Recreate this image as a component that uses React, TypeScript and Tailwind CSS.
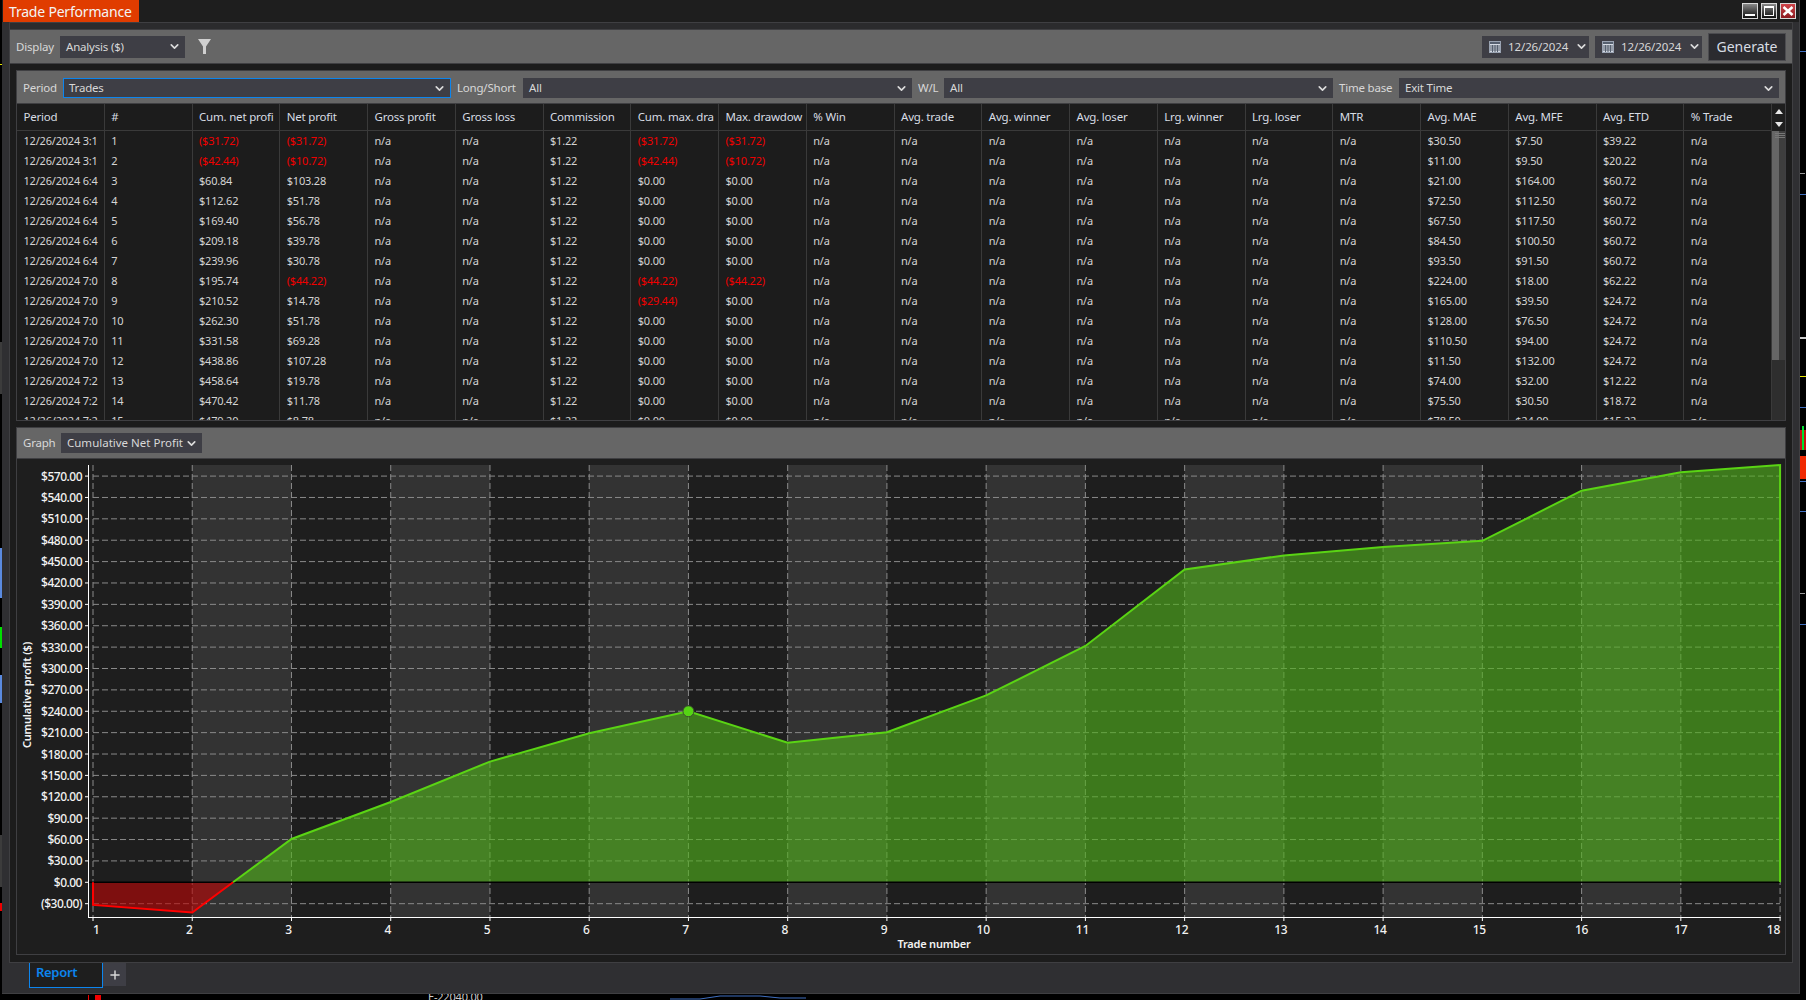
import React from 'react';
import { ChevronDown, Plus } from 'lucide-react';

const periodRows: [string, string, string, string, string, string, string, string, string][] = [
  ['3:1', '1', '($31.72)', '($31.72)', '($31.72)', '($31.72)', '$30.50', '$7.50', '$39.22'],
  ['3:1', '2', '($42.44)', '($10.72)', '($42.44)', '($10.72)', '$11.00', '$9.50', '$20.22'],
  ['6:4', '3', '$60.84', '$103.28', '$0.00', '$0.00', '$21.00', '$164.00', '$60.72'],
  ['6:4', '4', '$112.62', '$51.78', '$0.00', '$0.00', '$72.50', '$112.50', '$60.72'],
  ['6:4', '5', '$169.40', '$56.78', '$0.00', '$0.00', '$67.50', '$117.50', '$60.72'],
  ['6:4', '6', '$209.18', '$39.78', '$0.00', '$0.00', '$84.50', '$100.50', '$60.72'],
  ['6:4', '7', '$239.96', '$30.78', '$0.00', '$0.00', '$93.50', '$91.50', '$60.72'],
  ['7:0', '8', '$195.74', '($44.22)', '($44.22)', '($44.22)', '$224.00', '$18.00', '$62.22'],
  ['7:0', '9', '$210.52', '$14.78', '($29.44)', '$0.00', '$165.00', '$39.50', '$24.72'],
  ['7:0', '10', '$262.30', '$51.78', '$0.00', '$0.00', '$128.00', '$76.50', '$24.72'],
  ['7:0', '11', '$331.58', '$69.28', '$0.00', '$0.00', '$110.50', '$94.00', '$24.72'],
  ['7:0', '12', '$438.86', '$107.28', '$0.00', '$0.00', '$11.50', '$132.00', '$24.72'],
  ['7:2', '13', '$458.64', '$19.78', '$0.00', '$0.00', '$74.00', '$32.00', '$12.22'],
  ['7:2', '14', '$470.42', '$11.78', '$0.00', '$0.00', '$75.50', '$30.50', '$18.72'],
  ['7:2', '15', '$479.20', '$8.78', '$0.00', '$0.00', '$78.50', '$24.00', '$15.22'],
];

const columns = [
  'Period', '#', 'Cum. net profi', 'Net profit', 'Gross profit', 'Gross loss', 'Commission', 'Cum. max. dra', 'Max. drawdow', '% Win',
  'Avg. trade', 'Avg. winner', 'Avg. loser', 'Lrg. winner', 'Lrg. loser', 'MTR', 'Avg. MAE', 'Avg. MFE', 'Avg. ETD', '% Trade',
];

const na = 'n/a';

function toCells(r: string[]) {
  return [
    `12/26/2024 ${r[0]}`, r[1], r[2], r[3], na, na, '$1.22', r[4], r[5],
    na, na, na, na, na, na, na, r[6], r[7], r[8], na,
  ];
}

// chart scale, in page pixels
const curve = [-31.72, -42.44, 60.84, 112.62, 169.4, 209.18, 239.96, 195.74, 210.52, 262.3, 331.58, 438.86, 458.64, 470.42, 479.2, 549.5, 575.5, 585.5];
const xAt = (i: number) => 93 + i * 99.24;
const yAt = (v: number) => 882.3 - (v / 30) * 21.38;
const yTicks = Array.from({ length: 21 }, (_, i) => -30 + i * 30);
const money = (v: number) => (v < 0 ? `($${(-v).toFixed(2)})` : `$${v.toFixed(2)}`);

const crossX = xAt(1) + (xAt(2) - xAt(1)) * (42.44 / (42.44 + 60.84));
const greenPts = curve.slice(2).map((v, i) => `${xAt(i + 2)},${yAt(v)}`).join(' ');

function Select({ value, box, focused, wide }: { value: string; box: string; focused?: boolean; wide?: boolean }) {
  return (
    <div
      className={`flex items-center justify-between bg-[#3e3e45] pr-[4px] text-[#d8d8d8] ${box} ${
        focused ? 'border border-[#0c85ee] pl-[5px]' : 'pl-[6px]'
      }`}
    >
      <span className={`whitespace-nowrap ${wide ? 'tracking-normal' : ''}`}>{value}</span>
      <ChevronDown size={13} strokeWidth={3} className="text-[#dcdcdc] shrink-0" />
    </div>
  );
}

function CalendarIcon() {
  return (
    <svg width="12" height="12" viewBox="0 0 12 12" className="shrink-0">
      <rect x="0.5" y="0.5" width="11" height="11" fill="#d6dbe4" stroke="#9aa3b2" />
      <rect x="1" y="1" width="10" height="2" fill="#56606f" />
      <path d="M1 5h10M1 7h10M1 9h10M3.5 4v7M6 4v7M8.5 4v7" stroke="#56606f" strokeWidth="1" />
    </svg>
  );
}

function DatePick() {
  return (
    <div className="flex h-[22px] w-[107px] items-center gap-[7px] pl-[7px] pr-[5px] bg-[#3e3e45] text-[#d8d8d8]">
      <CalendarIcon />
      <span className="flex-1 tracking-[-0.1px]">12/26/2024</span>
      <ChevronDown size={13} strokeWidth={3} className="text-[#dcdcdc] shrink-0" />
    </div>
  );
}

function WindowButtons() {
  return (
    <div className="flex gap-[3px] pt-[3px] pr-[3px]">
      <div className="flex h-[16px] w-[16px] items-end justify-center border border-[#d8d8d8] bg-gradient-to-b from-[#8a8a8a] to-[#111111] pb-[2px]">
        <div className="h-[2px] w-[10px] bg-white" />
      </div>
      <div className="flex h-[16px] w-[16px] items-center justify-center border border-[#d8d8d8] bg-gradient-to-b from-[#8a8a8a] to-[#111111]">
        <div className="h-[10px] w-[10px] border border-white border-t-2" />
      </div>
      <div className="flex h-[16px] w-[16px] items-center justify-center border border-[#d8d8d8] bg-gradient-to-b from-[#d0454a] to-[#8c1a20]">
        <svg width="12" height="10" viewBox="0 0 12 10">
          <path d="M1.5 1l9 8M10.5 1l-9 8" stroke="#ffffff" strokeWidth="2.6" />
        </svg>
      </div>
    </div>
  );
}

function TradeTable() {
  return (
    <div className="flex h-[317px] overflow-hidden border-b border-[#3f3f42]">
      <div className="w-[1755px] shrink-0">
        <div className="grid h-[27px] grid-cols-[repeat(20,minmax(0,1fr))] border-b border-[#3a3a3a] text-[#d8dde4]">
          {columns.map((c) => (
            <div key={c} className="flex items-center overflow-hidden whitespace-nowrap border-r border-[#3a3a3a] pl-[6.5px]">
              {c}
            </div>
          ))}
        </div>
        {periodRows.map((r) => (
          <div key={r[1]} className="grid h-[20px] grid-cols-[repeat(20,minmax(0,1fr))] text-[11px] text-[#d4d4d4]">
            {toCells(r).map((c, i) => (
              <div
                key={i}
                className={`flex items-center overflow-hidden whitespace-nowrap border-r border-[#3a3a3a] pl-[6.5px] ${
                  c.startsWith('(') ? 'text-[#f00000]' : ''
                }`}
              >
                {c}
              </div>
            ))}
          </div>
        ))}
      </div>
      <div className="flex flex-1 flex-col bg-[#2e2e2e]">
        <div className="flex h-[27px] shrink-0 flex-col items-center justify-center gap-[8px] bg-[#1e1e1e]">
          <div className="h-0 w-0 border-x-[4px] border-b-[5px] border-x-transparent border-b-[#e8e8e8]" />
          <div className="h-0 w-0 border-x-[4px] border-t-[5px] border-x-transparent border-t-[#e8e8e8]" />
        </div>
        <div className="relative flex h-[229px] shrink-0">
          <div className="w-1/2 bg-[#666666]" />
          <div className="w-1/2 bg-[#3e3e3e]" />
          <div className="absolute left-[3px] right-0 top-[2px] flex flex-col gap-[1px]">
            <div className="h-px bg-[#777777]" />
            <div className="h-px bg-[#777777]" />
            <div className="h-px bg-[#777777]" />
          </div>
        </div>
      </div>
    </div>
  );
}

function ProfitChart() {
  return (
    <svg viewBox="17 459 1768 495" width="1768" height="495" className="block" fontFamily="'Noto Sans', sans-serif">
      {[1, 3, 5, 7, 9, 11, 13, 15].map((i) => (
        <rect key={i} x={xAt(i)} y="465" width="99.24" height="452" fill="#333333" />
      ))}
      {yTicks.filter((v) => v !== 0).map((v) => (
        <line key={v} x1="93" x2="1780" y1={yAt(v)} y2={yAt(v)} stroke="#8a8a8a" strokeDasharray="6 3" />
      ))}
      {curve.map((_, i) => (
        <line key={i} x1={xAt(i)} x2={xAt(i)} y1="465" y2="917" stroke="#8a8a8a" strokeDasharray="6 3" />
      ))}

      <polygon points={`${crossX},${yAt(0)} ${greenPts} ${xAt(17)},${yAt(0)}`} fill="rgb(80,178,27)" fillOpacity="0.62" />
      <polygon points={`${xAt(0)},${yAt(0)} ${xAt(0)},${yAt(curve[0])} ${xAt(1)},${yAt(curve[1])} ${crossX},${yAt(0)}`} fill="rgb(190,5,5)" fillOpacity="0.6" />
      <line x1="88" x2="1780" y1={yAt(0)} y2={yAt(0)} stroke="#000000" strokeWidth="1.5" />
      <polyline points={`${crossX},${yAt(0)} ${greenPts} ${xAt(17)},${yAt(0)}`} fill="none" stroke="#5ad414" strokeWidth="2" />
      <polyline points={`${xAt(0)},${yAt(0)} ${xAt(0)},${yAt(curve[0])} ${xAt(1)},${yAt(curve[1])} ${crossX},${yAt(0)}`} fill="none" stroke="#ff0000" strokeWidth="2" />
      <circle cx={xAt(6)} cy={yAt(curve[6])} r="5.5" fill="#55d414" stroke="#3a4a30" strokeWidth="1" />

      <line x1="88.5" x2="88.5" y1="465" y2="917.5" stroke="#ffffff" />
      <line x1="88" x2="1780.5" y1="917.5" y2="917.5" stroke="#ffffff" />
      {yTicks.map((v) => (
        <g key={v}>
          <line x1="85" x2="88" y1={yAt(v)} y2={yAt(v)} stroke="#ffffff" />
          <text x="82" y={yAt(v) + 4.5} textAnchor="end" fontSize="12" fontWeight="500" letterSpacing="-0.5" fill="#f2f2f2">
            {money(v)}
          </text>
        </g>
      ))}
      {curve.map((_, i) => (
        <g key={i}>
          <line x1={xAt(i)} x2={xAt(i)} y1="917" y2="921" stroke="#ffffff" />
          <text
            x={i === 0 ? 93 : i === 17 ? 1780 : i < 15 ? xAt(i) - 3 : xAt(i)}
            y="934"
            textAnchor={i === 0 ? 'start' : i === 17 ? 'end' : 'middle'}
            fontSize="12"
            fontWeight="500"
            letterSpacing="-0.3"
            fill="#f2f2f2"
          >
            {i + 1}
          </text>
        </g>
      ))}
      <text x="934" y="948" textAnchor="middle" fontSize="11" fontWeight="600" fill="#f2f2f2">
        Trade number
      </text>
      <text transform="translate(31 695) rotate(-90)" textAnchor="middle" fontSize="11" fontWeight="600" fill="#f2f2f2">
        Cumulative profit ($)
      </text>
    </svg>
  );
}

// bits of the trading chart that peek out behind the window
function BehindWindow() {
  return (
    <svg className="absolute inset-0" width="1806" height="1000" viewBox="0 0 1806 1000">
      {[51, 194, 407, 481, 511, 624].map((y) => (
        <rect key={y} x="1800" y={y} width="6" height="1" fill="#3f6fc0" />
      ))}
      {[173, 593].map((y) => (
        <rect key={y} x="1800" y={y} width="5" height="1" fill="#999999" />
      ))}
      <rect x="1800" y="337" width="6" height="2" fill="#cccccc" />
      <rect x="1800" y="376" width="6" height="1" fill="#e8e800" />
      <rect x="1800" y="430" width="6" height="20" fill="#c81010" />
      <rect x="1802" y="426" width="2" height="24" fill="#00e030" />
      <rect x="1800" y="456" width="6" height="23" fill="#f02800" />
      <rect x="0" y="64" width="2" height="1" fill="#e8e800" />
      <rect x="0" y="342" width="2" height="52" fill="#3c3c3c" />
      <rect x="0" y="548" width="2" height="50" fill="#5a8ae0" />
      <rect x="0" y="627" width="2" height="21" fill="#00e000" />
      <rect x="0" y="675" width="2" height="28" fill="#5a8ae0" />
      <rect x="0" y="835" width="2" height="52" fill="#3c3c3c" />
      <rect x="0" y="903" width="2" height="8" fill="#f00000" />
      <rect x="88" y="995" width="1" height="5" fill="#f00000" />
      <rect x="95" y="995" width="6" height="5" fill="#f00000" />
      <path d="M670 999h30l20-3h40l20 2h26" fill="none" stroke="#3f6fc0" />
      <text x="428" y="1001" fontSize="11" fontFamily="'Noto Sans', sans-serif" fill="#cccccc">
        E-22040.00
      </text>
    </svg>
  );
}

export default function App() {
  return (
    <div className="relative h-[1000px] w-[1806px] overflow-hidden bg-black font-['Noto_Sans',sans-serif] text-[11.5px] tracking-[-0.2px]">
      <BehindWindow />
      <div className="relative ml-[2px] flex h-[994px] w-[1798px] flex-col border-r border-b border-[#3f3f42] bg-[#2f2f32]">
        {/* title bar */}
        <div className="flex h-[22px] shrink-0 justify-between bg-[#1e1e1e] pl-px">
          <div className="flex w-[136px] items-center whitespace-nowrap bg-[#e03c00] pl-[6px] text-[14px] tracking-[-0.2px] text-[#f4f4f4]">
            Trade Performance
          </div>
          <WindowButtons />
        </div>

        {/* main frame */}
        <div className="ml-[7px] flex h-[941px] w-[1784px] shrink-0 flex-col border border-[#3f3f42] bg-[#1c1c1c]">
          <div className="h-[6px] shrink-0 bg-[#2b2b2d]" />
          {/* display toolbar */}
          <div className="flex h-[35px] shrink-0 items-center border-y border-[#3f3f42] bg-[#666666] pl-[6px] pr-[6px] text-[#d8d8d8]">
            <span className="w-[44px]">Display</span>
            <Select value="Analysis ($)" box="h-[22px] w-[125px]" />
            <svg width="13" height="15" viewBox="0 0 13 15" className="ml-[13px] mt-[-1px]">
              <path d="M0 0h13L8 7.5V15H5V7.5z" fill="#d0d0d0" />
            </svg>
            <div className="ml-auto flex items-center gap-[6px]">
              <DatePick />
              <DatePick />
              <button className="flex h-[28px] w-[78px] items-center justify-center border border-[#4c4c50] bg-[#2b2b2f] text-[14px] tracking-normal text-[#d8dde4]">
                Generate
              </button>
            </div>
          </div>
          <div className="h-[6px] shrink-0" />

          {/* report area */}
          <div className="mb-[7px] ml-[6px] flex w-[1770px] flex-1 flex-col">
            <div className="border-x border-t border-[#3f3f42]">
              <div className="flex h-[33px] items-center border-b border-[#3f3f42] bg-[#666666] pl-[6px] pt-[2px] text-[#d8d8d8]">
                <span className="w-[40px]">Period</span>
                <Select value="Trades" box="h-[20px] w-[388px]" focused />
                <span className="w-[72px] pl-[6px]">Long/Short</span>
                <Select value="All" box="h-[20px] w-[389px]" />
                <span className="w-[32px] pl-[6px]">W/L</span>
                <Select value="All" box="h-[20px] w-[389px]" />
                <span className="w-[66px] pl-[6px]">Time base</span>
                <Select value="Exit Time" box="h-[20px] w-[380px]" />
              </div>
              <TradeTable />
            </div>
            <div className="h-[6px] shrink-0" />
            <div className="flex flex-1 flex-col border-x border-b border-[#3f3f42] bg-[#1e1e1e]">
              <div className="flex h-[32px] shrink-0 items-center border-y border-[#3f3f42] bg-[#666666] pl-[6px] text-[#d8d8d8]">
                <span className="w-[38px]">Graph</span>
                <Select value="Cumulative Net Profit" box="h-[20px] w-[141px]" wide />
              </div>
              <ProfitChart />
            </div>
          </div>
        </div>

        {/* tab strip */}
        <div className="ml-[27px] flex items-start text-[13px] tracking-[-0.3px]">
          <div className="flex h-[25px] w-[74px] items-center border-x border-b border-[#0c85ee] bg-[#1e1e1e] pb-[4px] pl-[6px] font-semibold text-[#0c85ee]">
            Report
          </div>
          <div className="flex h-[23px] w-[23px] items-center justify-center bg-[#3e3e45]">
            <Plus size={14} strokeWidth={2.5} className="text-[#d8d8d8]" />
          </div>
        </div>
      </div>
    </div>
  );
}
